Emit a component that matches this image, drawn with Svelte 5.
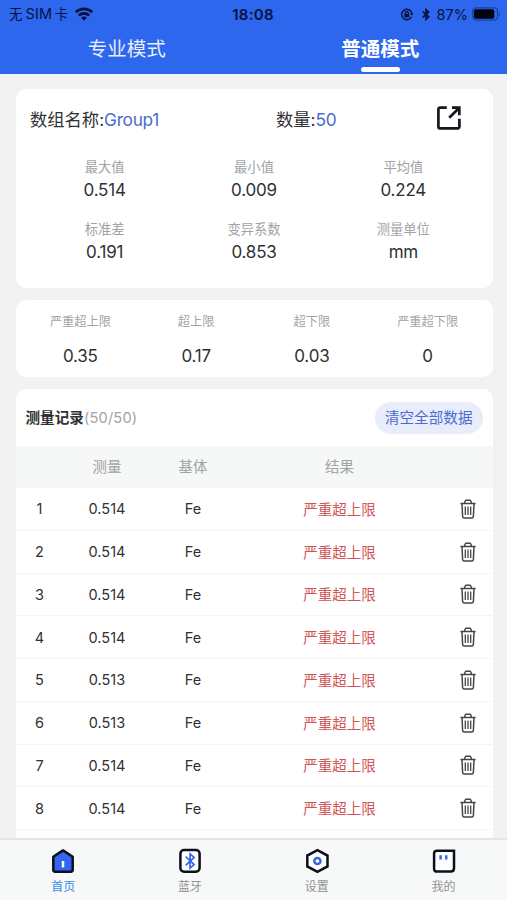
<script>
  const stats = [
    { label: '最大值', value: '0.514' },
    { label: '最小值', value: '0.009' },
    { label: '平均值', value: '0.224' },
    { label: '标准差', value: '0.191' },
    { label: '变异系数', value: '0.853' },
    { label: '测量单位', value: 'mm' }
  ];

  const limits = [
    { label: '严重超上限', value: '0.35' },
    { label: '超上限', value: '0.17' },
    { label: '超下限', value: '0.03' },
    { label: '严重超下限', value: '0' }
  ];

  const tabs = [
    { id: 'home', label: '首页' },
    { id: 'bluetooth', label: '蓝牙' },
    { id: 'settings', label: '设置' },
    { id: 'mine', label: '我的' }
  ];

  let records = $state(
    ['0.514', '0.514', '0.514', '0.514', '0.513', '0.513', '0.514', '0.514'].map((value, i) => ({
      id: i + 1,
      value,
      base: 'Fe',
      result: '严重超上限'
    }))
  );
  let mode = $state('normal');
  let activeTab = $state('home');

  function removeRecord(id) {
    records = records.filter((record) => record.id !== id);
  }
</script>

<div class="app">
  <header class="top">
    <div class="status-bar">
      <div class="carrier">
        <span class="carrier-name">无<span class="sim">SIM</span>卡</span>
        <svg width="18" height="14" viewBox="0 0 18 14" fill="none" stroke="currentColor" stroke-width="2.6">
          <path d="M.8 5.2C5.4.7 12.6.7 17.2 5.2" />
          <path d="M3.8 8.5c3-2.8 7.4-2.8 10.4 0" />
          <path d="M6.1 10.8c1.7-1.6 4.1-1.6 5.8 0L9 13.8z" fill="currentColor" stroke="none" />
        </svg>
      </div>
      <div class="clock">18:08</div>
      <div class="indicators">
        <svg width="14" height="13" viewBox="0 0 14 13" fill="none" stroke="currentColor" stroke-width="1.4">
          <path d="M11.6 8.7A5.2 5.2 0 1 1 11.7 4.6M11.6 4.4v2.4" />
          <path d="M10.3 5.4h3.2l-1.6 2.3z" fill="currentColor" stroke="none" />
          <rect x="4.3" y="6" width="5" height="3.6" rx=".5" fill="currentColor" stroke="none" />
          <path d="M5.3 6.2V5a1.5 1.5 0 0 1 3 0v1.2" />
        </svg>
        <svg class="bt" width="8" height="13" viewBox="0 0 8 13" fill="none" stroke="currentColor" stroke-width="1.6">
          <path d="M.7 3.7l6 5.2L4 11.5v-10l2.7 2.6-6 5.2" />
        </svg>
        <span class="percent">87%</span>
        <svg width="29" height="14" viewBox="0 0 29 14">
          <rect x=".6" y=".8" width="25" height="12.4" rx="3.6" fill="none" stroke="currentColor" stroke-opacity=".45" stroke-width="1.3" />
          <rect x="1.9" y="2.2" width="20.4" height="9.6" rx="2" fill="#03040f" />
          <path d="M27 5c1.6.6 1.6 3.4 0 4z" fill="currentColor" fill-opacity=".4" />
        </svg>
      </div>
    </div>
    <nav class="modes">
      <button class:active={mode === 'pro'} onclick={() => (mode = 'pro')}>专业模式</button>
      <button class:active={mode === 'normal'} onclick={() => (mode = 'normal')}>普通模式</button>
    </nav>
  </header>

  <main>
    <section class="card summary">
      <div class="group">
        <div class="group-name">数组名称:<em>Group1</em></div>
        <div class="group-count">数量:<em>50</em></div>
        <button class="export" aria-label="导出">
          <svg width="26" height="26" viewBox="0 0 26 26" fill="none" stroke="currentColor" stroke-width="2.7">
            <path d="M10.8 2.7H3.9A1.5 1.5 0 0 0 2.4 4.2v17.6a1.5 1.5 0 0 0 1.5 1.5h18a1.5 1.5 0 0 0 1.5-1.5v-8" />
            <path d="M16 2.7h7.3v7.6M22.8 3.2l-9.6 9.6" />
          </svg>
        </button>
      </div>
      <div class="stats">
        {#each stats as stat}
          <div class="stat">
            <span class="label">{stat.label}</span>
            <span class="value">{stat.value}</span>
          </div>
        {/each}
      </div>
    </section>

    <section class="card limits">
      {#each limits as limit}
        <div class="limit">
          <span class="label">{limit.label}</span>
          <span class="value">{limit.value}</span>
        </div>
      {/each}
    </section>

    <section class="card records">
      <div class="records-head">
        <h2>测量记录<span>(50/50)</span></h2>
        <button class="clear" onclick={() => (records = [])}>清空全部数据</button>
      </div>
      <div class="row row-head">
        <span></span>
        <span>测量</span>
        <span>基体</span>
        <span>结果</span>
        <span></span>
      </div>
      {#each records as record (record.id)}
        <div class="row">
          <span>{record.id}</span>
          <span>{record.value}</span>
          <span>{record.base}</span>
          <span class="over">{record.result}</span>
          <button class="trash" aria-label="删除" onclick={() => removeRecord(record.id)}>
            <svg width="16" height="20" viewBox="0 0 16 20" fill="none" stroke="currentColor" stroke-width="1.5">
              <path d="M.4 4.6h15.2M4.4 4.4l.8-2.5q.2-.7 1-.7h3.6q.8 0 1 .7l.8 2.5" />
              <path d="M2 4.8l.6 12.4q.1 1.8 1.7 1.8h7.4q1.6 0 1.7-1.8L14 4.8" />
              <path d="M5.3 7.5v8.6M8 7.5v8.6M10.7 7.5v8.6" stroke-width="1.3" />
            </svg>
          </button>
        </div>
      {/each}
    </section>
  </main>

  <nav class="tab-bar">
    {#each tabs as tab}
      <button class:active={activeTab === tab.id} onclick={() => (activeTab = tab.id)}>
        <svg width="26" height="26" viewBox="0 0 26 26" fill="none" stroke="#0b101c" stroke-width="2.5">
          {#if tab.id === 'home'}
            <path d="M13 2.4L22.7 8.7V21.8q0 1.9-1.9 1.9H5.2q-1.9 0-1.9-1.9V8.7z" fill="#3266ee" stroke-linejoin="round" />
            <path d="M13 13v6.4" stroke="#fff" stroke-width="2.5" />
          {:else if tab.id === 'bluetooth'}
            <rect x="3.4" y="2.1" width="19.2" height="21.6" rx="3.6" fill="#fff" />
            <path d="M8.7 8.7l8.4 7.9-4 3.5V5.9l4 3.5-8.4 7.9" stroke="#3468e6" stroke-width="1.7" />
          {:else if tab.id === 'settings'}
            <path d="M13.4 2.1L23.5 7.6v10.8l-10.1 5.5-10.1-5.5V7.6z" fill="#fff" />
            <circle cx="13.4" cy="13" r="3.1" stroke="#3468e6" stroke-width="2.5" />
          {:else}
            <path d="M6 2.7h17V20.3q0 3.3-3.3 3.3H6q-2.9 0-2.9-2.9V5.6Q3.1 2.7 6 2.7z" fill="#fff" />
            <path d="M9.6 7.3v4.2M15.2 7.3v4.2" stroke="#3468e6" stroke-width="2.5" />
          {/if}
        </svg>
        <span>{tab.label}</span>
      </button>
    {/each}
  </nav>
</div>

<style>
  :global(body) {
    margin: 0;
  }

  .app {
    display: flex;
    flex-direction: column;
    height: 900px;
    overflow: hidden;
    background: #f2f2f2;
    color: #303133;
    font-family: Inter, 'Noto Sans CJK SC', sans-serif;
  }

  button {
    padding: 0;
    border: 0;
    background: none;
    color: inherit;
    font: inherit;
    cursor: pointer;
  }

  svg {
    display: block;
    flex: none;
  }

  .top {
    flex: none;
    height: 74px;
    background: #2d67ee;
  }

  .status-bar {
    display: grid;
    grid-template-columns: 1fr auto 1fr;
    align-items: center;
    height: 27px;
    padding: 0 6px 0 9px;
    color: #07133f;
    line-height: 27px;
  }

  .carrier,
  .indicators {
    display: flex;
    align-items: center;
  }

  .carrier {
    gap: 7px;
  }

  .carrier-name {
    font-size: 13.5px;
  }

  .sim {
    margin: 0 2px 0 3px;
    font-size: 14.5px;
    letter-spacing: 0.2px;
  }

  .clock {
    margin-right: 4px;
    font-size: 15px;
    font-weight: 600;
    letter-spacing: 0.3px;
  }

  .indicators {
    justify-content: flex-end;
  }

  .bt {
    margin: 0 7px 0 8px;
  }

  .percent {
    margin-right: 4px;
    font-size: 14.5px;
  }

  .modes {
    display: grid;
    grid-template-columns: 1fr 1fr;
    height: 47px;
  }

  .modes button {
    display: flex;
    flex-direction: column;
    align-items: center;
    padding-top: 8px;
    color: #e8eefd;
    font-size: 19.5px;
    line-height: 28px;
  }

  .modes .active {
    color: #fff;
    font-weight: 600;
  }

  .modes .active::after {
    content: '';
    width: 39px;
    height: 5px;
    margin-top: 4px;
    border-radius: 3px;
    background: #fff;
  }

  main {
    display: flex;
    flex: 1;
    flex-direction: column;
    gap: 12px;
    min-height: 0;
    padding: 14.5px 14.5px 0 15.5px;
    overflow: hidden;
  }

  .card {
    flex: none;
    box-sizing: border-box;
    border-radius: 10px;
    background: #fff;
  }

  .summary {
    height: 199.5px;
    padding: 0 14.5px;
  }

  .group {
    display: grid;
    grid-template-columns: 246px 1fr 25px;
    align-items: center;
    height: 59px;
    font-size: 17.3px;
  }

  .group em {
    color: #4a6bd0;
    font-style: normal;
    letter-spacing: -0.3px;
  }

  .export {
    margin-left: -17px;
    color: #15171f;
  }

  .stats {
    display: grid;
    grid-template-columns: repeat(3, 1fr);
    grid-auto-rows: 62px;
    padding-top: 9px;
  }

  .stat,
  .limit {
    display: flex;
    flex-direction: column;
    align-items: center;
  }

  .label {
    color: #a0a3a8;
    font-size: 13.3px;
    line-height: 21px;
  }

  .value {
    font-size: 17px;
    letter-spacing: -0.2px;
    line-height: 25px;
  }

  .limits {
    display: grid;
    grid-template-columns: repeat(4, 1fr);
    height: 77px;
    padding: 11px 7px 0;
  }

  .limits .label {
    font-size: 12.2px;
  }

  .limits .value {
    margin-top: 12px;
  }

  .records {
    flex: 1;
    min-height: 0;
    border-radius: 10px 10px 0 0;
  }

  .records-head {
    display: flex;
    align-items: center;
    justify-content: space-between;
    box-sizing: border-box;
    height: 57px;
    padding: 0 10px;
  }

  h2 {
    margin: 0 0 3px;
    font-size: 14.6px;
    font-weight: 600;
  }

  h2 span {
    color: #a0a3a8;
    font-weight: 400;
    letter-spacing: 0.2px;
  }

  .clear {
    height: 32px;
    padding: 0 10px 2px;
    border-radius: 16px;
    background: #e8ecfb;
    color: #4a6bd0;
    font-size: 14.6px;
  }

  .row {
    display: grid;
    grid-template-columns: 48px 87px 85px 208px 1fr;
    align-items: center;
    box-sizing: border-box;
    height: 42.75px;
    border-bottom: 1.5px solid #f4f4f4;
    font-size: 14.5px;
    text-align: center;
  }

  .row-head {
    height: 42px;
    padding-bottom: 3px;
    border-bottom: 0;
    background: #f6f7f7;
    color: #a0a3a8;
  }

  .over {
    padding-bottom: 1px;
    color: #cf5654;
  }

  .trash {
    justify-self: center;
    color: #454545;
  }

  .tab-bar {
    display: grid;
    flex: none;
    grid-template-columns: repeat(4, 1fr);
    box-sizing: border-box;
    height: 62px;
    border-top: 2px solid #e4e5e6;
    background: #f7f8f8;
  }

  .tab-bar button {
    display: flex;
    flex-direction: column;
    align-items: center;
    padding-top: 8px;
    color: #929292;
    font-size: 12px;
    line-height: 20px;
  }

  .tab-bar span {
    margin-top: 3px;
  }

  .tab-bar .active {
    color: #348ce8;
  }
</style>
